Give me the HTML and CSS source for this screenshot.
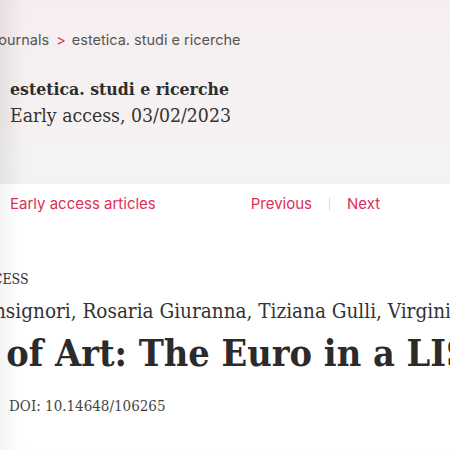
FILE: index.html
```html
<!DOCTYPE html>
<html lang="it">
<head>
    <meta charset="UTF-8">
    <title>estetica. studi e ricerche - Early access</title>
    <link rel="stylesheet" href="styles.css">
</head>
<body>

<div class="page">
    <!-- Testata della rivista -->
    <header class="issue-head">
        <nav class="crumbs">
            <span>Journals</span>
            <span class="sep">&gt;</span>
            <span>estetica. studi e ricerche</span>
        </nav>
        <div class="journal">estetica. studi e ricerche</div>
        <div class="issue">Early access, 03/02/2023</div>
    </header>

    <!-- Navigazione articoli -->
    <div class="article-nav">
        <a href="#" class="link">Early access articles</a>
        <div class="pager">
            <a href="#" class="link">Previous</a>
            <span class="bar"></span>
            <a href="#" class="link">Next</a>
        </div>
    </div>

    <!-- Articolo -->
    <div class="article">
        <div class="access">OPEN ACCESS</div>
        <div class="authors">Monsignori, Rosaria Giuranna, Tiziana Gulli, Virginia Rossi</div>
        <h1 class="title">Works of Art: The Euro in a LIS Translation</h1>
        <div class="doi">DOI: 10.14648/106265</div>
    </div>
</div>

</body>
</html>
```

FILE: styles.css
```css
body {
    margin: 0;
    background-color: white;
    color: #333;
    font-family: "Inter", "Open Sans", sans-serif;
    overflow: hidden;
}

.page {
    height: 450px;
    overflow: hidden;
    box-shadow: inset 22px 0 20px -14px rgba(0,0,0,0.06);
}

a {
    text-decoration: none;
}

.issue-head {
    height: 184px;
    padding: 0 10px;
    box-sizing: border-box;
    background: linear-gradient(#f7eeef, #f4f3f3);
    box-shadow: inset 24px 0 22px -14px rgba(0,0,0,0.08);
}

.crumbs {
    padding-top: 31px;
    margin-left: -20px;
    font-size: 14.5px;
    color: #555;
    white-space: nowrap;
}

.crumbs .sep {
    color: #dc2f55;
    margin: 0 2px 0 3px;
}

.journal {
    margin-top: 31px;
    font-family: "DejaVu Serif Condensed", "DejaVu Serif", serif;
    font-weight: bold;
    font-size: 17.5px;
    color: #2d2d2d;
}

.issue {
    margin-top: 5px;
    font-family: "DejaVu Serif Condensed", "DejaVu Serif", serif;
    font-size: 19.3px;
    color: #333;
}

.article-nav {
    display: flex;
    align-items: center;
    padding: 10px 10px;
    font-size: 15px;
}

.link {
    color: #dc2f55;
}

.pager {
    display: flex;
    align-items: center;
    margin-left: 95px;
}

.bar {
    width: 1px;
    height: 14px;
    background-color: #ddd;
    margin: 0 17px;
}

.article {
    padding-top: 48px;
    white-space: nowrap;
}

.access {
    margin-left: -69px;
    font-family: "DejaVu Serif Condensed", "DejaVu Serif", serif;
    font-size: 14px;
    color: #333;
}

.authors {
    margin-top: 12px;
    margin-left: -36px;
    font-family: "DejaVu Serif Condensed", "DejaVu Serif", serif;
    font-size: 20.5px;
    color: #333;
}

.title {
    margin: 8px 0 0 -123px;
    font-family: "DejaVu Serif Condensed", "DejaVu Serif", serif;
    font-weight: bold;
    font-size: 37.5px;
    color: #2b2b2b;
}

.doi {
    margin: 22px 0 0 9px;
    font-family: "DejaVu Serif Condensed", "DejaVu Serif", serif;
    font-size: 15px;
    color: #444;
}
```
